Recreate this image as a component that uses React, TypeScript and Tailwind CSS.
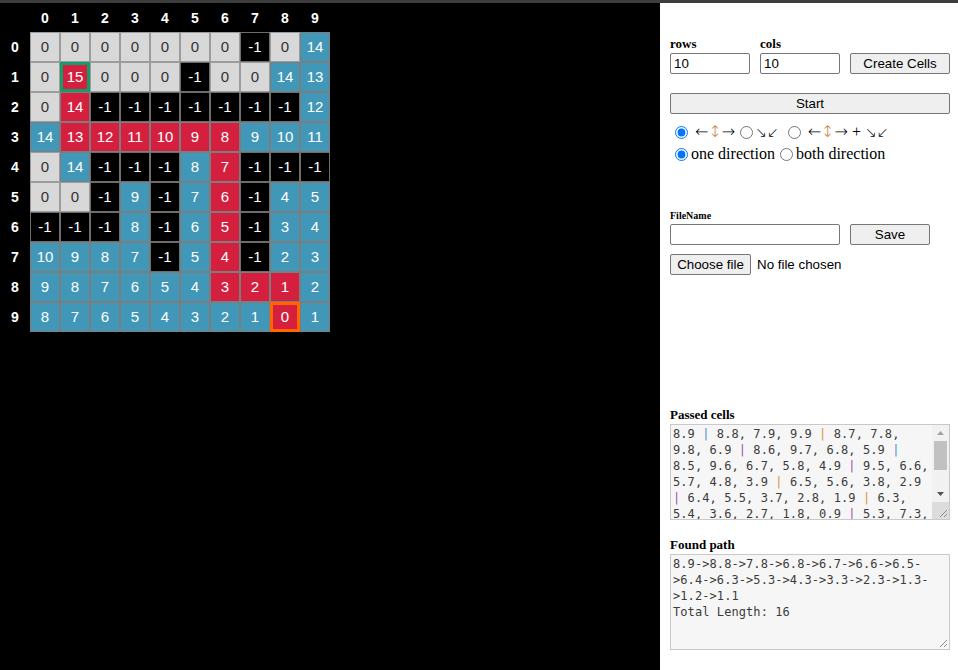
import React from "react";

const GRID = [
  [0, 0, 0, 0, 0, 0, 0, -1, 0, 14],
  [0, 15, 0, 0, 0, -1, 0, 0, 14, 13],
  [0, 14, -1, -1, -1, -1, -1, -1, -1, 12],
  [14, 13, 12, 11, 10, 9, 8, 9, 10, 11],
  [0, 14, -1, -1, -1, 8, 7, -1, -1, -1],
  [0, 0, -1, 9, -1, 7, 6, -1, 4, 5],
  [-1, -1, -1, 8, -1, 6, 5, -1, 3, 4],
  [10, 9, 8, 7, -1, 5, 4, -1, 2, 3],
  [9, 8, 7, 6, 5, 4, 3, 2, 1, 2],
  [8, 7, 6, 5, 4, 3, 2, 1, 0, 1],
];

// row,col of the found path
const PATH = new Set([
  "9,8", "8,8", "8,7", "8,6", "7,6", "6,6", "5,6", "4,6", "3,6",
  "3,5", "3,4", "3,3", "3,2", "3,1", "2,1", "1,1",
]);

const START = "1,1";
const END = "9,8";

function cellClass(r: number, c: number, v: number) {
  const key = `${r},${c}`;
  if (key === START) return "bg-[#d41f3e] text-white border-[3px] border-[#179c69]";
  if (key === END) return "bg-[#d41f3e] text-white border-[3px] border-[#ff6600]";
  if (PATH.has(key)) return "bg-[#d41f3e] text-white border border-[#7d7d7d]";
  if (v === -1) return "bg-black text-white border border-[#6e6e6e]";
  if (v === 0) return "bg-[#d8d8d8] text-[#333] border border-[#9c9c9c]";
  return "bg-[#4197b7] text-white border border-[#7d7d7d]";
}

const Pipe = ({ c }: { c: string }) => <span style={{ color: c }}>|</span>;

const BLUE = "#3f8fd0";
const ORANGE = "#d8913c";
const PURPLE = "#a04aa8";

function Grip() {
  return (
    <svg width="9" height="9" viewBox="0 0 9 9" className="block">
      <path d="M1 8 L8 1 M5 8 L8 5" stroke="#8a8a8a" strokeWidth="1" />
    </svg>
  );
}

const Straight = () => (
  <span className="flex items-center h-[20px] text-[16px] leading-[20px] font-['DejaVu_Sans',sans-serif] font-extralight">
    ←<span className="text-[#c47a32]">↕</span>→
  </span>
);

const Diag = () => (
  <span className="flex items-center h-[20px] text-[14px] leading-[20px] font-['DejaVu_Sans',sans-serif] font-extralight">↘↙</span>
);

const input = "h-[21px] border border-[#767676] rounded-[2px] px-[3px] text-[13.33px] text-black bg-white";
const btn = "h-[21px] border border-[#767676] rounded-[2px] bg-[#efefef] text-[13.33px] text-black";
const radio = "w-[13px] h-[13px] accent-[#0075ff] shrink-0";

export default function App() {
  return (
    <div className="w-[958px] h-[670px] flex flex-col overflow-hidden font-['Liberation_Sans',Arial,sans-serif]">
      <div className="h-[3px] bg-[#3d3d3d] shrink-0" />
      <div className="flex flex-1">
        {/* board */}
        <div className="w-[660px] bg-black">
          <div className="grid grid-cols-[30px_repeat(10,30px)] grid-rows-[29px_repeat(10,30px)]">
            <div />
            {GRID[0].map((_, c) => (
              <div key={c} className="flex items-center justify-center pt-[1px] text-white font-bold text-[14px]">{c}</div>
            ))}
            {GRID.map((row, r) => (
              <React.Fragment key={r}>
                <div className="flex items-center justify-center text-white font-bold text-[14px]">{r}</div>
                {row.map((v, c) => (
                  <div key={c} className={`flex items-center justify-center text-[15px] ${cellClass(r, c, v)}`}>{v}</div>
                ))}
              </React.Fragment>
            ))}
          </div>
        </div>

        {/* controls */}
        <div className="flex-1 bg-white pl-[10px] pt-[33px] font-['Liberation_Serif','Times_New_Roman',serif] text-black">
          <div className="flex gap-[10px]">
            <div className="flex flex-col w-[80px]">
              <span className="text-[13px] font-bold leading-[15px] h-[17px]">rows</span>
              <input className={`${input} w-[80px] font-['Liberation_Sans',Arial,sans-serif]`} defaultValue="10" />
            </div>
            <div className="flex flex-col w-[80px]">
              <span className="text-[13px] font-bold leading-[15px] h-[17px]">cols</span>
              <input className={`${input} w-[80px] font-['Liberation_Sans',Arial,sans-serif]`} defaultValue="10" />
            </div>
            <div className="flex flex-col justify-end">
              <button className={`${btn} w-[100px] font-['Liberation_Sans',Arial,sans-serif]`}>Create Cells</button>
            </div>
          </div>

          <button className={`${btn} w-[280px] mt-[19px] font-['Liberation_Sans',Arial,sans-serif]`}>Start</button>

          <div className="mt-[6px] text-[16px]">
            <div className="h-[22px] flex items-center whitespace-pre">
              <input type="radio" name="mode" defaultChecked className={`${radio} ml-[5px]`} />
              <span className="ml-[7px]"><Straight /></span>
              <input type="radio" name="mode" className={`${radio} ml-[5px]`} />
              <span className="ml-[2px]"><Diag /></span>
              <input type="radio" name="mode" className={`${radio} ml-[9px]`} />
              <span className="ml-[7px]"><Straight /></span>
              <span className="ml-[4px]">+</span>
              <span className="ml-[4px]"><Diag /></span>
            </div>
            <div className="h-[22px] flex items-center whitespace-pre">
              <input type="radio" name="dir" defaultChecked className={`${radio} ml-[5px] mr-[3px]`} />
              {"one direction"}
              <input type="radio" name="dir" className={`${radio} ml-[5px] mr-[3px]`} />
              {"both direction"}
            </div>
          </div>

          <div className="mt-[45px] text-[10px] font-bold leading-[12px] h-[14px]">FileName</div>
          <div className="flex gap-[10px]">
            <input className={`${input} w-[170px]`} />
            <button className={`${btn} w-[80px] font-['Liberation_Sans',Arial,sans-serif]`}>Save</button>
          </div>
          <div className="mt-[9px] flex items-center gap-[6px] font-['Liberation_Sans',Arial,sans-serif] text-[13.33px]">
            <button className={`${btn} w-[81px]`}>Choose file</button>
            <span>No file chosen</span>
          </div>

          <div className="mt-[132px] text-[13px] font-bold leading-[15px] h-[17px]">Passed cells</div>
          <div className="w-[280px] h-[96px] border border-[#c9c9c9] bg-[#f6f6f6] flex overflow-hidden">
            <div className="flex-1 pl-[2px] pt-[1px] font-['DejaVu_Sans_Mono',monospace] text-[12px] tracking-[0.08px] leading-[16px] text-[#3c3c3c] whitespace-pre overflow-hidden">
              <div>8.9 <Pipe c={BLUE} /> 8.8, 7.9, 9.9 <Pipe c={ORANGE} /> 8.7, 7.8,</div>
              <div>9.8, 6.9 <Pipe c={PURPLE} /> 8.6, 9.7, 6.8, 5.9 <Pipe c={BLUE} /></div>
              <div>8.5, 9.6, 6.7, 5.8, 4.9 <Pipe c={PURPLE} /> 9.5, 6.6,</div>
              <div>5.7, 4.8, 3.9 <Pipe c={ORANGE} /> 6.5, 5.6, 3.8, 2.9</div>
              <div><Pipe c={PURPLE} /> 6.4, 5.5, 3.7, 2.8, 1.9 <Pipe c={ORANGE} /> 6.3,</div>
              <div>5.4, 3.6, 2.7, 1.8, 0.9 <Pipe c={PURPLE} /> 5.3, 7.3,</div>
            </div>
            <div className="w-[17px] flex flex-col bg-[#f1f1f1]">
              <div className="h-[16px] flex items-center justify-center">
                <svg width="7" height="4" viewBox="0 0 7 4"><path d="M0 4 L3.5 0 L7 4 Z" fill="#a3a3a3" /></svg>
              </div>
              <div className="h-[29px] mx-[2px] bg-[#c1c1c1]" />
              <div className="flex-1" />
              <div className="h-[16px] flex items-center justify-center">
                <svg width="7" height="4" viewBox="0 0 7 4"><path d="M0 0 L7 0 L3.5 4 Z" fill="#505050" /></svg>
              </div>
              <div className="h-[17px] bg-[#dcdcdc] flex items-end justify-end pr-[1px] pb-[1px]">
                <Grip />
              </div>
            </div>
          </div>

          <div className="mt-[17px] text-[13px] font-bold leading-[15px] h-[17px]">Found path</div>
          <div className="w-[280px] h-[96px] border border-[#c9c9c9] bg-[#f6f6f6] flex flex-col overflow-hidden">
            <div className="flex-1 pl-[2px] pt-[1px] font-['DejaVu_Sans_Mono',monospace] text-[12px] tracking-[0.08px] leading-[16px] text-[#3c3c3c] whitespace-pre">
              <div>8.9-&gt;8.8-&gt;7.8-&gt;6.8-&gt;6.7-&gt;6.6-&gt;6.5-</div>
              <div>&gt;6.4-&gt;6.3-&gt;5.3-&gt;4.3-&gt;3.3-&gt;2.3-&gt;1.3-</div>
              <div>&gt;1.2-&gt;1.1</div>
              <div>Total Length: 16</div>
            </div>
            <div className="flex justify-end pr-[1px] pb-[1px]">
              <Grip />
            </div>
          </div>
        </div>
      </div>
    </div>
  );
}
